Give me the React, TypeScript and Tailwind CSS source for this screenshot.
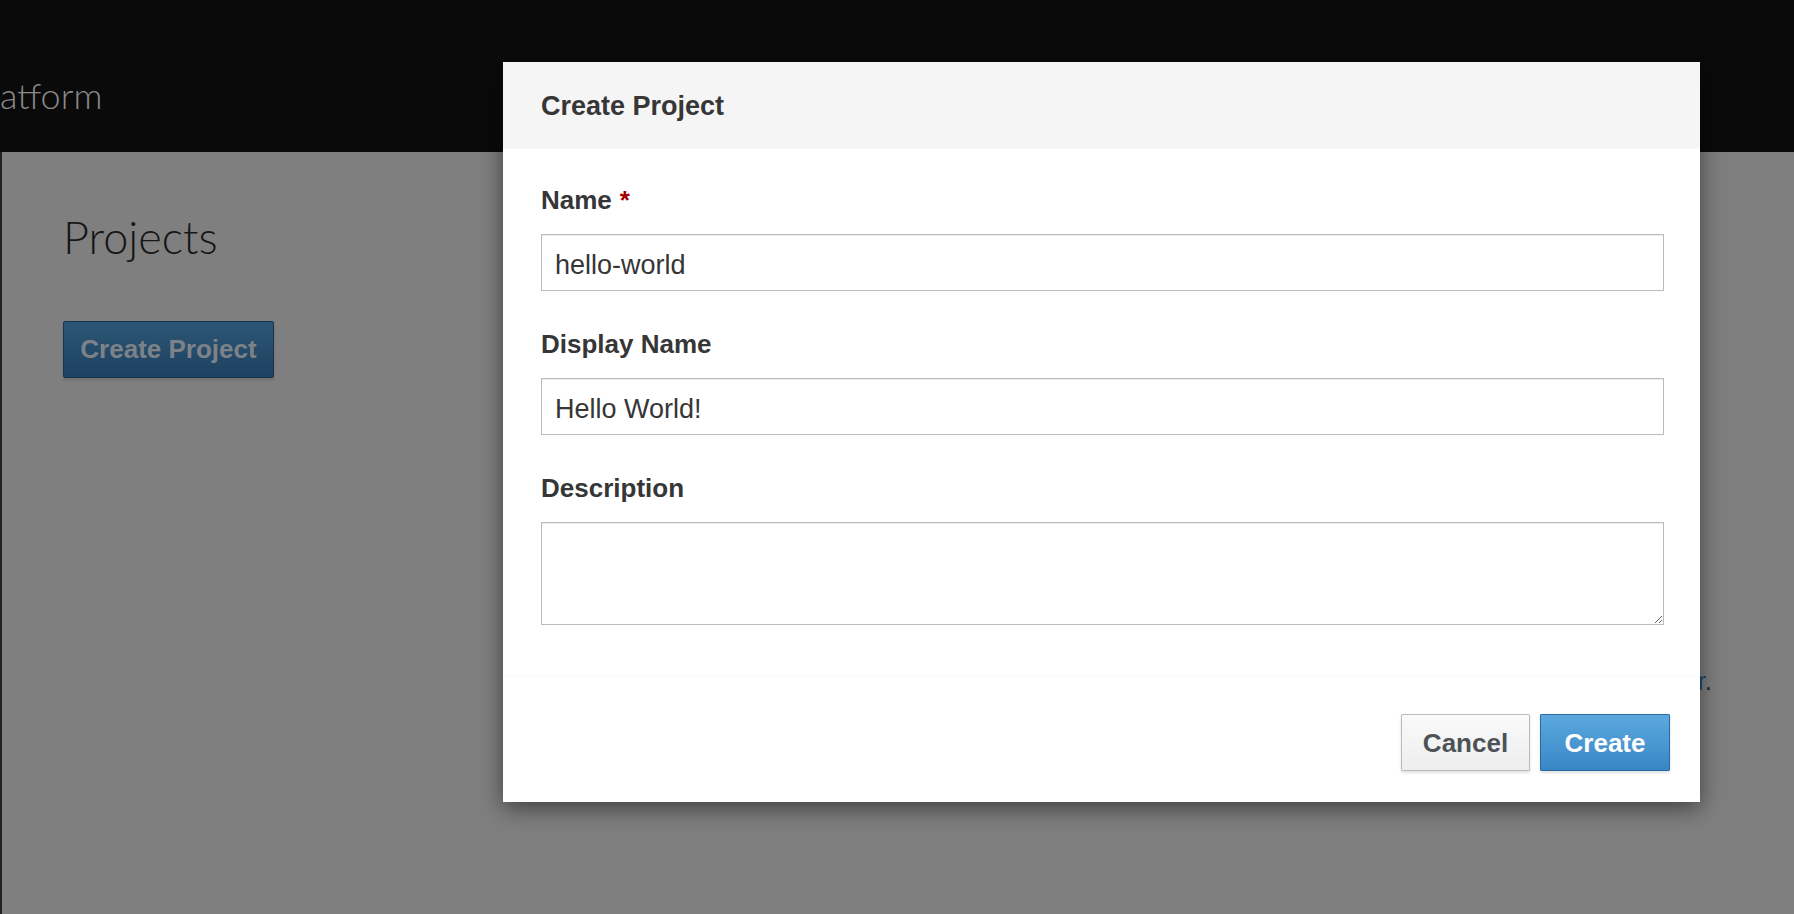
import React from "react";

const sans = "font-['Liberation_Sans',Arial,sans-serif]";
const light = "font-['Lato','Open_Sans',sans-serif] font-light";

function Field({
  label,
  required,
  children,
}: {
  label: string;
  required?: boolean;
  children: React.ReactNode;
}) {
  return (
    <div className="flex flex-col">
      <label className="text-[26px] leading-[36px] font-bold text-[#363636] mb-4">
        {label}
        {required && <span className="text-[#a30000] ml-2">*</span>}
      </label>
      {children}
    </div>
  );
}

export default function App() {
  const inputCls =
    "h-[57px] w-full border border-[#bbbbbb] bg-white px-[13px] pt-[5px] text-[27px] text-[#363636] shadow-[inset_0_1px_1px_rgba(3,3,3,0.08)] outline-none";

  return (
    <div className={`relative h-[914px] w-full overflow-hidden bg-[#7f7f7f] ${sans}`}>
      {/* Top bar (behind backdrop) */}
      <header className="h-[152px] bg-[#0a0a0a] pt-[74px]">
        <span className={`block text-[36px] leading-[42px] text-[#8a8a8a] ${light}`}>atform</span>
      </header>

      {/* Page content (dimmed) */}
      <main className="h-[762px] border-l-2 border-[#1f1f26] px-[61px] pt-[58px]">
        <h1 className={`text-[45px] leading-[54px] text-[#161616] ${light}`}>Projects</h1>
        <button className="mt-[57px] h-[57px] w-[211px] rounded-[2px] border border-[#17334d] bg-gradient-to-b from-[#2c5675] to-[#1d4161] text-[26px] font-bold text-[#7d8288] shadow-[0_2px_3px_rgba(0,0,0,0.15)]">
          Create Project
        </button>
        <p className="mt-[288px] pr-[21px] text-right text-[26px] leading-[30px] text-[#2b2b2b]">
          To learn more, take the <span className="text-[#1b4a6e]">Getting Started Tour</span>.
        </p>
      </main>

      {/* Modal dialog */}
      <div className="absolute left-[503px] top-[62px] w-[1197px] bg-white shadow-[0_6px_22px_rgba(0,0,0,0.5)]">
        <div className="flex h-[87px] items-center border-b border-[#f8f8f8] bg-[#f5f5f5] px-[38px] pt-[2px]">
          <h2 className="text-[27px] font-bold text-[#363636]">Create Project</h2>
        </div>

        <div className="flex flex-col gap-[35px] pl-[38px] pr-[36px] pt-[33px] pb-[51px]">
          <Field label="Name" required>
            <input className={inputCls} defaultValue="hello-world" />
          </Field>
          <Field label="Display Name">
            <input className={inputCls} defaultValue="Hello World!" />
          </Field>
          <Field label="Description">
            <textarea className="h-[103px] w-full resize-y border border-[#bbbbbb] bg-white px-[13px] py-2 text-[27px] text-[#363636] shadow-[inset_0_1px_1px_rgba(3,3,3,0.08)] outline-none" />
          </Field>
        </div>

        <div className="flex justify-end gap-[10px] border-t border-[#fbfbfb] pl-[38px] pr-[30px] pt-[37px] pb-[31px]">
          <button className="h-[57px] w-[129px] rounded-[1px] border border-[#bbbbbb] bg-gradient-to-b from-[#fafafa] to-[#ededed] pt-[2px] text-[26px] font-bold text-[#4d5258] shadow-[0_2px_3px_rgba(3,3,3,0.12)]">
            Cancel
          </button>
          <button className="h-[57px] w-[130px] rounded-[1px] border border-[#2a69a3] bg-gradient-to-b from-[#5ba9dd] to-[#3986c7] pt-[2px] text-[26px] font-bold text-white shadow-[0_2px_3px_rgba(3,3,3,0.12)]">
            Create
          </button>
        </div>
      </div>
    </div>
  );
}
